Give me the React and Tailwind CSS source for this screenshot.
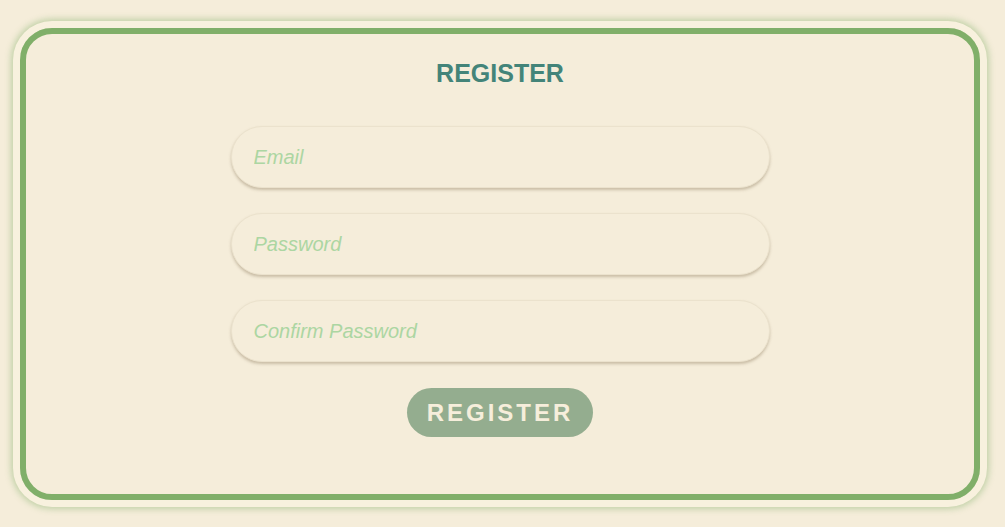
export default function App() {
  const inputCls =
    "w-[539px] h-[62px] rounded-full bg-[#f5edda] border border-[#ebe2cd] shadow-[0_2px_3px_rgba(120,100,70,0.35)] pl-[22px] text-[20px] italic outline-none placeholder:text-[#acd6a2] text-[#5a7d55]";
  return (
    <div className="min-h-[527px] w-[1005px] bg-[#f5edda] pt-[28px] pl-[20px] font-['Liberation_Sans',Arial,sans-serif]">
      <div className="w-[960px] h-[472px] rounded-[32px] border-[6px] border-[#80af69] shadow-[0_0_0_7px_#f8f1de,0_0_6px_9px_rgba(128,175,105,0.45)] flex flex-col items-center">
        <h1 className="mt-[24px] text-[25px] font-bold text-[#438479] leading-[30px]">REGISTER</h1>
        <div className="mt-[38px] flex flex-col gap-[25px]">
          <input className={inputCls} placeholder="Email" />
          <input className={inputCls} placeholder="Password" type="password" />
          <input className={inputCls} placeholder="Confirm Password" type="password" />
        </div>
        <button className="mt-[26px] w-[186px] h-[49px] rounded-full bg-[#94ad8f] text-[#f6eedb] text-[24px] font-bold tracking-[3px]">
          REGISTER
        </button>
      </div>
    </div>
  );
}
